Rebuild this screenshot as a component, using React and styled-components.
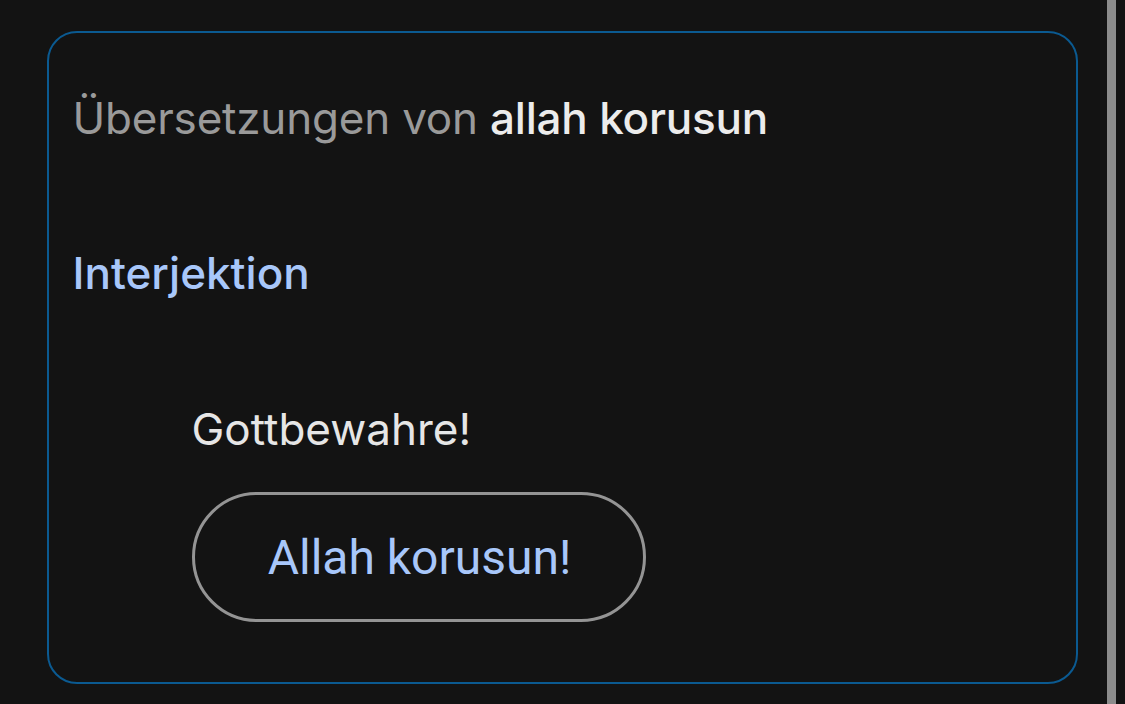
import React from "react";
import styled, { createGlobalStyle } from "styled-components";

const Global = createGlobalStyle`
  html, body { margin: 0; padding: 0; background: #131313; }
  body { font-family: Inter, "Noto Sans", sans-serif; }
`;

const Page = styled.div`
  display: flex;
  width: 1125px;
  height: 704px;
  overflow: hidden;
  background: #131313;
`;

const Main = styled.div`
  flex: 1;
  padding: 31px 29px 0 47px;
`;

const Scrollbar = styled.div`
  width: 18px;
  display: flex;
  justify-content: flex-start;
`;

const Thumb = styled.div`
  width: 9px;
  height: 100%;
  background: #8c8c8c;
`;

const Card = styled.section`
  box-sizing: border-box;
  height: 653px;
  border: 2.5px solid #0b5a91;
  border-radius: 30px;
  padding: 61px 24px 0 23.5px;
`;

const Title = styled.h2`
  margin: 0;
  font-size: 44px;
  line-height: 48px;
  font-weight: 400;
  color: #9a9a9a;
  letter-spacing: -0.2px;
`;

const Query = styled.span`
  color: #ececec;
  font-weight: 500;
`;

const Pos = styled.h3`
  margin: 107px 0 0 0;
  font-size: 44px;
  line-height: 48px;
  font-weight: 500;
  color: #a8c7fa;
`;

const Entry = styled.div`
  margin: 108px 0 0 119px;
  display: flex;
  flex-direction: column;
  align-items: flex-start;
`;

const Word = styled.div`
  font-size: 44px;
  line-height: 48px;
  color: #e6e6e6;
`;

const Chip = styled.button`
  box-sizing: border-box;
  margin-top: 39px;
  height: 130px;
  width: 454px;
  border: 3px solid #949494;
  border-radius: 65px;
  background: transparent;
  color: #a8c7fa;
  font-family: Roboto, "Liberation Sans", sans-serif;
  font-size: 48px;
  padding: 0 0 0 2px;
`;

export default function App() {
  return (
    <Page>
      <Global />
      <Main>
        <Card>
          <Title>
            Übersetzungen von <Query>allah korusun</Query>
          </Title>
          <Pos>Interjektion</Pos>
          <Entry>
            <Word>Gottbewahre!</Word>
            <Chip>Allah korusun!</Chip>
          </Entry>
        </Card>
      </Main>
      <Scrollbar>
        <Thumb />
      </Scrollbar>
    </Page>
  );
}
